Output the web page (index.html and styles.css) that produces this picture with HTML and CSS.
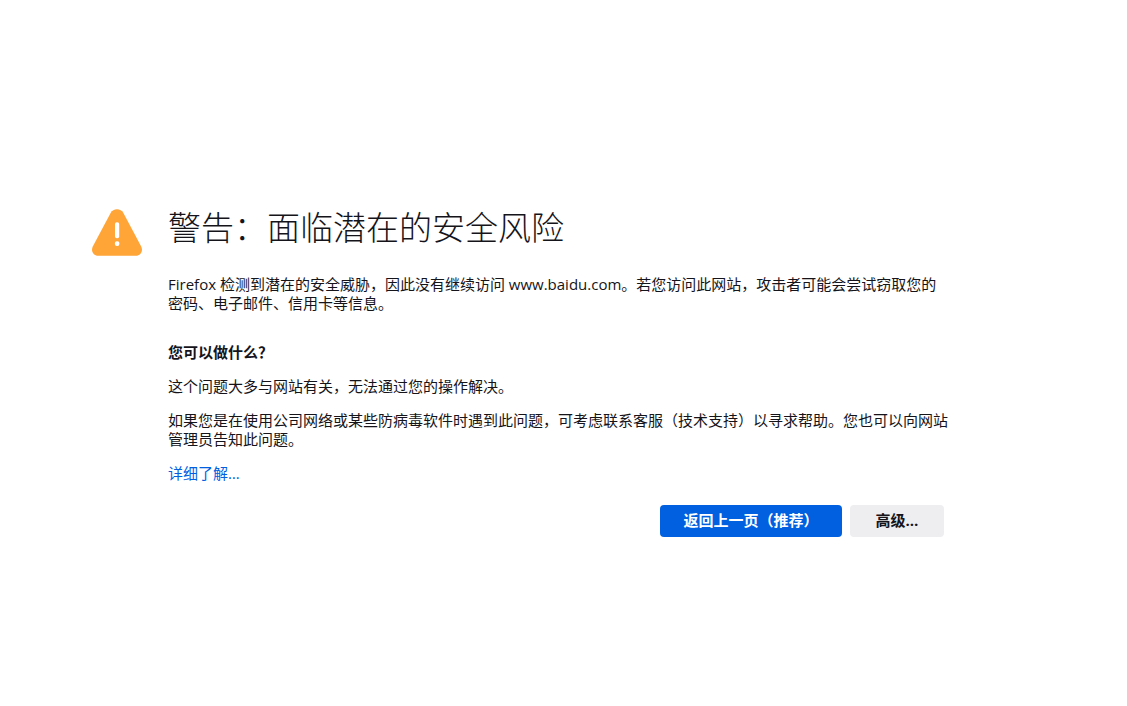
FILE: index.html
```html
<!DOCTYPE html>
<html lang="zh-CN">
<head>
<meta charset="utf-8">
<title>警告：面临潜在的安全风险</title>
<link rel="stylesheet" href="styles.css">
</head>
<body>
<main class="warning">
  <svg class="warning-icon" viewBox="0 0 50 48" aria-hidden="true">
    <path class="triangle" d="M18.6 3.9C21.4-1.1 28.6-1.1 31.4 3.9L49.2 37.6C51.4 42 48.6 46.8 43.8 46.8H6.2C1.4 46.8-1.4 42 .8 37.6Z"/>
    <rect class="mark" x="23" y="13.3" width="4.2" height="16" rx="1.8"/>
    <rect class="mark" x="22.9" y="32.2" width="4.5" height="4.7" rx="1.9"/>
  </svg>
  <div class="content">
    <h1 class="title">警告：面临潜在的安全风险</h1>
    <p class="intro">Firefox 检测到潜在的安全威胁，因此没有继续访问 www.baidu.com。若您访问此网站，攻击者可能会尝试窃取您的密码、电子邮件、信用卡等信息。</p>
    <h2 class="subtitle">您可以做什么？</h2>
    <p class="text">这个问题大多与网站有关，无法通过您的操作解决。</p>
    <p class="text">如果您是在使用公司网络或某些防病毒软件时遇到此问题，可考虑联系客服（技术支持）以寻求帮助。您也可以向网站管理员告知此问题。</p>
    <p class="text"><a class="link" href="#">详细了解…</a></p>
    <div class="actions">
      <button class="button primary" type="button">返回上一页（推荐）</button>
      <button class="button" type="button">高级…</button>
    </div>
  </div>
</main>
</body>
</html>
```
FILE: styles.css
```css
* {
  box-sizing: border-box;
}

body {
  margin: 0;
  min-height: 100vh;
  display: flex;
  flex-direction: column;
  align-items: center;
  justify-content: center;
  padding: 70px 92px 40px;
  background: #fff;
  color: #15141a;
  font: 15px/19px "Open Sans", "Noto Sans CJK SC", sans-serif;
}

.warning {
  display: flex;
  gap: 26px;
  width: 100%;
  max-width: 943px;
  padding-right: 86px;
}

.warning-icon {
  flex: none;
  width: 50px;
  height: 48px;
  margin-top: 9px;
}

.triangle {
  fill: #ffa436;
}

.mark {
  fill: #fff;
}

.content {
  flex: 1;
  min-width: 0;
}

.title {
  margin: 0 0 19px;
  font-size: 33px;
  line-height: 56px;
  font-weight: 300;
}

.intro {
  margin: 0 0 30px;
}

.subtitle {
  margin: 0 0 15px;
  font-size: 15px;
  line-height: 19px;
  font-weight: 700;
}

.text {
  margin: 0 0 15px;
}

.link {
  color: #0060df;
  text-decoration: none;
}

.actions {
  display: flex;
  justify-content: flex-end;
  gap: 8px;
  margin: 22px 5px 0 0;
}

.button {
  min-width: 94px;
  height: 32px;
  padding: 0 23px;
  border: 0;
  border-radius: 4px;
  background: #eeeef0;
  color: #15141a;
  font: inherit;
  font-weight: 700;
}

.primary {
  min-width: 182px;
  background: #0060df;
  color: #fff;
}
```
